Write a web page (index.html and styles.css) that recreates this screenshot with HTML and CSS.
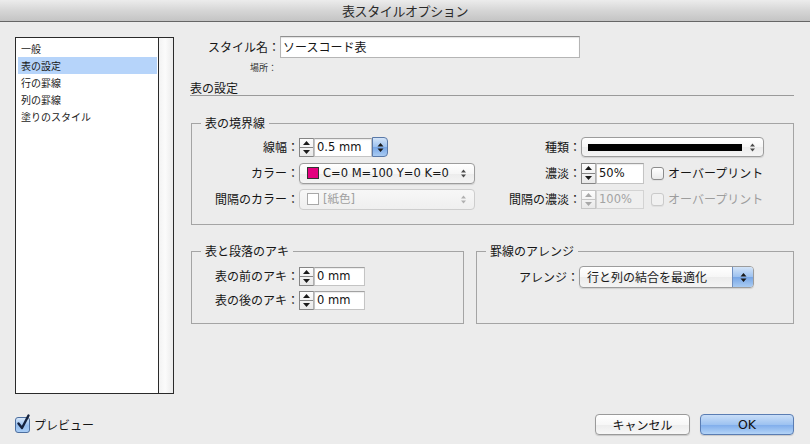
FILE: index.html
```html
<!DOCTYPE html>
<html lang="ja">
<head>
<meta charset="utf-8">
<title>表スタイルオプション</title>
<link rel="stylesheet" href="styles.css">
</head>
<body>
<div class="titlebar">表スタイルオプション</div>
<div class="main">
  <div class="sidebar">
    <div class="list">
      <div class="item">一般</div>
      <div class="item sel">表の設定</div>
      <div class="item">行の罫線</div>
      <div class="item">列の罫線</div>
      <div class="item">塗りのスタイル</div>
    </div>
    <div class="scroll"></div>
  </div>
  <div class="panel">
    <div class="name-row">
      <div class="name-label">スタイル名：</div>
      <div class="name-box">ソースコード表</div>
    </div>
    <div class="place">場所：</div>
    <div class="section-head">表の設定</div>

    <fieldset class="group g-border">
      <legend>表の境界線</legend>
      <div class="cols">
        <div class="form form-left">
          <div class="lbl">線幅：</div>
          <div class="ctl">
            <div class="stepper"><span class="up"><svg width="7" height="4" viewBox="0 0 7 4"><path d="M3.5 0L7 4H0Z" fill="#1a1a1a"/></svg></span><span class="down"><svg width="7" height="4" viewBox="0 0 7 4"><path d="M0 0H7L3.5 4Z" fill="#1a1a1a"/></svg></span></div>
            <div class="field w-weight">0.5 mm</div>
            <div class="blue-btn"><svg width="7" height="11" viewBox="0 0 7 11"><path d="M3.5 1L6.5 4.5H0.5Z M3.5 10L6.5 6.5H0.5Z" fill="#1a1a1a"/></svg></div>
          </div>
          <div class="lbl">カラー：</div>
          <div class="ctl">
            <div class="popup w-color">
              <span class="swatch magenta"></span>
              <span class="ptext">C=0 M=100 Y=0 K=0</span>
              <svg class="arrows" width="7" height="11" viewBox="0 0 7 11"><path d="M3.5 1.5L6 4.5H1Z M3.5 9.5L6 6.5H1Z" fill="#4a4a4a"/></svg>
            </div>
          </div>
          <div class="lbl">間隔のカラー：</div>
          <div class="ctl">
            <div class="popup w-color disabled">
              <span class="swatch paper"></span>
              <span class="ptext">[紙色]</span>
              <svg class="arrows" width="7" height="11" viewBox="0 0 7 11"><path d="M3.5 1.5L6 4.5H1Z M3.5 9.5L6 6.5H1Z" fill="#b0b0b0"/></svg>
            </div>
          </div>
        </div>

        <div class="form form-right">
          <div class="lbl">種類：</div>
          <div class="ctl">
            <div class="popup w-type">
              <span class="stroke-line"></span>
              <svg class="arrows" width="7" height="11" viewBox="0 0 7 11"><path d="M3.5 1.5L6 4.5H1Z M3.5 9.5L6 6.5H1Z" fill="#4a4a4a"/></svg>
            </div>
          </div>
          <div class="lbl">濃淡：</div>
          <div class="ctl">
            <div class="stepper tall"><span class="up"><svg width="7" height="4" viewBox="0 0 7 4"><path d="M3.5 0L7 4H0Z" fill="#1a1a1a"/></svg></span><span class="down"><svg width="7" height="4" viewBox="0 0 7 4"><path d="M0 0H7L3.5 4Z" fill="#1a1a1a"/></svg></span></div>
            <div class="field tall w-tint">50%</div>
            <span class="cb"></span>
            <span class="cb-label">オーバープリント</span>
          </div>
          <div class="lbl">間隔の濃淡：</div>
          <div class="ctl disabled">
            <div class="stepper"><span class="up"><svg width="7" height="4" viewBox="0 0 7 4"><path d="M3.5 0L7 4H0Z" fill="#a8a8a8"/></svg></span><span class="down"><svg width="7" height="4" viewBox="0 0 7 4"><path d="M0 0H7L3.5 4Z" fill="#a8a8a8"/></svg></span></div>
            <div class="field w-tint">100%</div>
            <span class="cb"></span>
            <span class="cb-label">オーバープリント</span>
          </div>
        </div>
      </div>
    </fieldset>

    <div class="row2">
      <fieldset class="group g-space">
        <legend>表と段落のアキ</legend>
        <div class="form form-space">
          <div class="lbl">表の前のアキ：</div>
          <div class="ctl">
            <div class="stepper"><span class="up"><svg width="7" height="4" viewBox="0 0 7 4"><path d="M3.5 0L7 4H0Z" fill="#1a1a1a"/></svg></span><span class="down"><svg width="7" height="4" viewBox="0 0 7 4"><path d="M0 0H7L3.5 4Z" fill="#1a1a1a"/></svg></span></div>
            <div class="field w-space">0 mm</div>
          </div>
          <div class="lbl">表の後のアキ：</div>
          <div class="ctl">
            <div class="stepper"><span class="up"><svg width="7" height="4" viewBox="0 0 7 4"><path d="M3.5 0L7 4H0Z" fill="#1a1a1a"/></svg></span><span class="down"><svg width="7" height="4" viewBox="0 0 7 4"><path d="M0 0H7L3.5 4Z" fill="#1a1a1a"/></svg></span></div>
            <div class="field w-space">0 mm</div>
          </div>
        </div>
      </fieldset>
      <fieldset class="group g-arrange">
        <legend>罫線のアレンジ</legend>
        <div class="form form-arrange">
          <div class="lbl">アレンジ：</div>
          <div class="ctl">
            <div class="popup w-arrange">
              <span class="ptext jp">行と列の結合を最適化</span>
              <span class="blue-seg"><svg width="7" height="11" viewBox="0 0 7 11"><path d="M3.5 1L6.5 4.5H0.5Z M3.5 10L6.5 6.5H0.5Z" fill="#1a1a1a"/></svg></span>
            </div>
          </div>
        </div>
      </fieldset>
    </div>
  </div>
</div>
<div class="footer">
  <div class="preview">
    <span class="pcb"><svg width="16" height="18" viewBox="0 0 16 18"><path d="M3.5 9.5L7 14L13.5 1.5" fill="none" stroke="#15233f" stroke-width="2.4" stroke-linecap="round" stroke-linejoin="round"/></svg></span>
    <span class="preview-label">プレビュー</span>
  </div>
  <div class="buttons">
    <div class="btn">キャンセル</div>
    <div class="btn ok">OK</div>
  </div>
</div>
</body>
</html>
```

FILE: styles.css
```css
* { box-sizing: border-box; }
html, body { margin: 0; padding: 0; }
body {
  width: 810px;
  height: 444px;
  overflow: hidden;
  background: #ececec;
  font-family: "DejaVu Sans", "Noto Sans CJK JP", sans-serif;
  font-size: 12px;
  color: #161616;
}
.jp { font-family: "Noto Sans CJK JP", sans-serif; }

.titlebar {
  height: 22px;
  background: linear-gradient(#ececec, #d6d6d6 50%, #c4c4c4);
  border-bottom: 1px solid #666;
  display: flex;
  align-items: center;
  justify-content: center;
  font-family: "Noto Sans CJK JP", sans-serif;
  font-size: 13px;
  line-height: 16px;
  letter-spacing: -0.4px;
  color: #2a2a2a;
}

.main {
  display: flex;
  height: 372px;
  padding-left: 15px;
  gap: 17px;
}

.sidebar {
  margin-top: 15px;
  width: 159px;
  height: 357px;
  border: 1px solid #2a2a2a;
  background: #fff;
  display: flex;
}
.list {
  width: 143px;
  border-right: 1px solid #2a2a2a;
  padding-top: 2px;
}
.scroll {
  flex: 1;
  background: linear-gradient(90deg, #f3f3f3, #fbfbfb 45%, #ebebeb);
}
.item {
  height: 17px;
  line-height: 17px;
  margin: 0 1px 0 2px;
  padding-left: 3px;
  font-family: "Noto Sans CJK JP", sans-serif;
  font-size: 10px;
  color: #1a1a1a;
}
.item.sel { background: #b6d4fa; }

.panel {
  margin-top: 14px;
  width: 603px;
}

.name-row {
  display: flex;
  align-items: center;
  height: 22px;
}
.name-label {
  width: 89px;
  text-align: right;
  font-family: "Noto Sans CJK JP", sans-serif;
  font-size: 12px;
  line-height: 16px;
}
.name-box {
  width: 300px;
  height: 22px;
  background: #fff;
  border: 1px solid #b5b5b5;
  border-top-color: #8f8f8f;
  box-shadow: inset 0 1px 1px rgba(0,0,0,0.12);
  padding-left: 2px;
  font-family: "Noto Sans CJK JP", sans-serif;
  font-size: 12px;
  line-height: 19px;
}
.place {
  width: 86px;
  margin-top: 4px;
  height: 12px;
  text-align: right;
  font-family: "Noto Sans CJK JP", sans-serif;
  font-size: 9px;
  line-height: 12px;
  color: #333;
}
.section-head {
  margin-top: 7px;
  height: 15px;
  line-height: 14px;
  border-bottom: 1px solid #9a9a9a;
  font-family: "Noto Sans CJK JP", sans-serif;
  font-size: 12px;
  margin-left: -1px;
}

.group {
  margin: 0;
  padding: 0;
  border: 1px solid #a4a4a4;
  min-width: 0;
}
.group legend {
  margin-left: 9px;
  padding: 0 4px;
  font-family: "Noto Sans CJK JP", sans-serif;
  font-size: 12px;
  line-height: 16px;
}
.g-border {
  margin-top: 19px;
  padding: 6px 0 15px 0;
}
.cols { display: flex; }

.form {
  display: grid;
  grid-auto-rows: 20px;
  row-gap: 6px;
  align-items: center;
}
.form-left { grid-template-columns: 107px 176px; }
.form-right { grid-template-columns: 106px 183px; }
.lbl {
  text-align: right;
  font-family: "Noto Sans CJK JP", sans-serif;
  font-size: 12px;
  line-height: 16px;
  white-space: nowrap;
}
.ctl {
  display: flex;
  align-items: center;
  height: 20px;
}

.stepper {
  width: 15px;
  height: 19px;
  border: 1px solid #858585;
  border-right-color: #b0b0b0;
  background: linear-gradient(#fdfdfd, #e9e9e9);
  display: flex;
  flex-direction: column;
}
.stepper.tall { height: 21px; }
.stepper span {
  flex: 1;
  display: flex;
  align-items: center;
  justify-content: center;
}
.stepper .up { border-bottom: 1px solid #858585; }

.field {
  height: 19px;
  background: #fff;
  border: 1px solid #c4c4c4;
  border-top-color: #a2a2a2;
  box-shadow: inset 0 1px 1px rgba(0,0,0,0.08);
  padding-left: 2px;
  font-size: 11.5px;
  line-height: 17px;
  color: #111;
}
.field.tall { height: 21px; line-height: 19px; }
.w-weight { width: 58px; }
.w-tint { width: 48px; }
.w-space { width: 51px; }

.blue-btn {
  width: 16px;
  height: 20px;
  border: 1px solid #5a79a8;
  border-radius: 0 4px 4px 0;
  background: linear-gradient(#d3e4f8, #9cc1ef 50%, #77a6e6 51%, #a9cbf2);
  display: flex;
  align-items: center;
  justify-content: center;
}

.popup {
  height: 21px;
  border: 1px solid #9c9c9c;
  border-radius: 4px;
  background: linear-gradient(#ffffff, #f6f6f6 50%, #ececec 51%, #f4f4f4);
  box-shadow: 0 1px 1px rgba(0,0,0,0.12);
  display: flex;
  align-items: center;
  padding: 0 7px 0 7px;
  font-size: 11.5px;
  line-height: 16px;
  white-space: nowrap;
}
.popup .arrows { margin-left: auto; flex: none; }
.w-color { width: 176px; }
.w-type { width: 183px; height: 20px; padding-left: 6px; }
.popup.disabled {
  border-color: #cdcdcd;
  box-shadow: none;
  color: #a0a0a0;
  background: linear-gradient(#f7f7f7, #efefef);
}
.swatch {
  width: 12px;
  height: 12px;
  flex: none;
  margin-right: 4px;
}
.swatch.magenta { background: #e4007f; border: 1px solid #333; }
.swatch.paper { background: #fff; border: 1px solid #a8a8a8; }
.stroke-line {
  width: 154px;
  height: 7px;
  background: #000;
}

.cb {
  width: 13px;
  height: 13px;
  margin-left: 7px;
  border: 1px solid #8c8c8c;
  border-radius: 3px;
  background: linear-gradient(#ffffff, #e9e9e9);
  box-shadow: 0 1px 0 rgba(0,0,0,0.05);
  flex: none;
}
.cb-label {
  margin-left: 4px;
  font-family: "Noto Sans CJK JP", sans-serif;
  font-size: 12px;
  line-height: 16px;
  white-space: nowrap;
}
.ctl.disabled { color: #9d9d9d; }
.ctl.disabled .stepper { border-color: #c6c6c6; }
.ctl.disabled .stepper .up { border-bottom-color: #c6c6c6; }
.ctl.disabled .field { color: #a3a3a3; background: #efefef; border-color: #d3d3d3; box-shadow: none; }
.ctl.disabled .cb { border-color: #cacaca; background: #f1f1f1; }

.row2 {
  display: flex;
  gap: 12px;
  margin-top: 18px;
}
.g-space {
  width: 273px;
  padding: 7px 0 13px 0;
}
.g-arrange {
  width: 318px;
  padding: 7px 0 13px 0;
}
.form-space {
  grid-template-columns: 107px 70px;
  row-gap: 4px;
}
.form-arrange {
  grid-template-columns: 102px 175px;
  grid-auto-rows: 22px;
}
.w-arrange {
  width: 175px;
  height: 22px;
  padding: 0 0 0 7px;
  overflow: hidden;
}
.w-arrange .ptext { font-size: 12px; color: #1a1a1a; }
.blue-seg {
  margin-left: auto;
  width: 21px;
  height: 100%;
  border-left: 1px solid #6f8fc0;
  background: linear-gradient(#d3e4f8, #9cc1ef 50%, #77a6e6 51%, #a9cbf2);
  display: flex;
  align-items: center;
  justify-content: center;
}

.footer {
  display: flex;
  align-items: center;
  justify-content: space-between;
  padding: 20px 16px 0 15px;
}
.preview {
  display: flex;
  align-items: center;
}
.pcb {
  position: relative;
  width: 15px;
  height: 16px;
  border: 1px solid #4d6f9f;
  border-radius: 3px;
  background: linear-gradient(#d8e8fa, #94bdef 55%, #a9cdf5);
}
.pcb svg {
  position: absolute;
  left: -1px;
  top: -4px;
}
.preview-label {
  margin-left: 4px;
  font-family: "Noto Sans CJK JP", sans-serif;
  font-size: 12px;
  line-height: 16px;
}
.buttons {
  display: flex;
  gap: 10px;
}
.btn {
  width: 95px;
  height: 21px;
  border: 1px solid #9a9a9a;
  border-radius: 4px;
  background: linear-gradient(#ffffff, #f7f7f7 50%, #ececec 51%, #f7f7f7);
  box-shadow: 0 1px 1px rgba(0,0,0,0.15);
  display: flex;
  align-items: center;
  justify-content: center;
  font-family: "Noto Sans CJK JP", sans-serif;
  font-size: 12px;
  line-height: 16px;
  color: #111;
}
.btn.ok {
  width: 94px;
  border-color: #5a7db3;
  background: linear-gradient(#c9def8, #9ec3f1 50%, #7eaceb 51%, #b4d4f7);
  font-family: "DejaVu Sans", sans-serif;
  font-size: 12.5px;
}
```
